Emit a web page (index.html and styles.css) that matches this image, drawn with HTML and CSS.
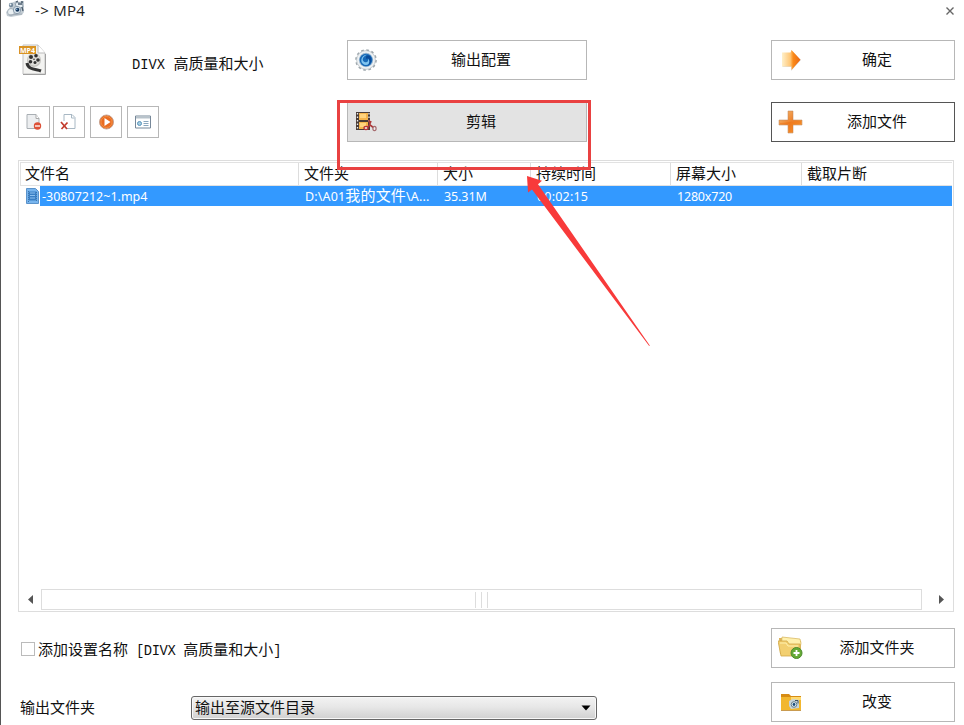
FILE: index.html
```html
<!DOCTYPE html>
<html lang="zh-CN">
<head>
<meta charset="utf-8">
<title>MP4</title>
<link rel="stylesheet" href="styles.css">
</head>
<body>
<div class="window">
  <header class="titlebar">
    <svg class="app-icon" width="20" height="18" viewBox="0 0 20 18">
      <path d="M5 3l5-2 3 1 5-1v11l-2 3-11 2-4-1-1-4 3-3z" fill="#c4cdd4"/>
      <path d="M9 3l7-1 1 5-6 2z" fill="#e6edf2" stroke="#8595a3" stroke-width=".8"/>
      <path d="M10 2l2-1M15 2l2 0M12 4h4M16 7l1 4" stroke="#4a5b6c" stroke-width="1.3"/>
      <circle cx="5" cy="5" r="2.2" fill="#72879a"/><circle cx="4.5" cy="4.5" r=".9" fill="#edf4f7"/>
      <circle cx="5" cy="12" r="3.5" fill="#e9eff2" stroke="#a5b0ba"/>
      <circle cx="11" cy="10" r="3.7" fill="#dce6ee" stroke="#8b9cab"/>
      <circle cx="11.4" cy="9.8" r="2" fill="#16385c"/><circle cx="10.8" cy="9.2" r=".7" fill="#a5ceed"/>
      <path d="M3 15l13-1" stroke="#a0abb5"/>
    </svg>
    <span class="title">-&gt; MP4</span>
    <svg class="close" width="10" height="10" viewBox="0 0 10 10"><path d="M1.500 1.500l7 7M8.500 1.500l-7 7" stroke="#666" stroke-width="1.400"/></svg>
  </header>

  <section class="controls">
    <div class="profile">
      <svg width="29" height="34" viewBox="0 0 29 34">
        <path d="M4 2h15l7 8v21H4z" fill="#f3f3f1" stroke="#c3c3c3"/>
        <path d="M4 31.500h22.500V11" fill="none" stroke="#a0a0a0"/>
        <path d="M19 2v8h7" fill="#fff" stroke="#bbb"/>
        <circle cx="15" cy="17" r="7" fill="#c4c3bf"/><circle cx="15" cy="16.500" r="6" fill="#deddd9"/>
        <g fill="#303030"><circle cx="12" cy="14" r="2"/><circle cx="17" cy="12.700" r="1.800"/><circle cx="19" cy="17" r="1.800"/><circle cx="11.500" cy="18.700" r="1.800"/><circle cx="16" cy="19.500" r="1.500"/><circle cx="15" cy="16.300" r=".8"/></g>
        <path d="M8 20c1 7 9 6 14 8" fill="none" stroke="#333" stroke-width="3"/>
        <path d="M0 3h17v8H0z" fill="#d99323"/>
        <text x="1" y="9.800" class="badge-text" textLength="15">MP4</text>
      </svg>
      <span class="profile-name"><span class="mono">DIVX </span>高质量和大小</span>
    </div>
    <button class="btn config">
      <svg width="24" height="24" viewBox="0 0 24 24">
        <circle cx="12" cy="12" r="10" fill="#e5eaee" stroke="#9da6ac" stroke-width="1.600" stroke-dasharray="2.620 2.620"/>
        <circle cx="12" cy="12" r="9.300" fill="#eff2f4" stroke="#b2babf" stroke-width=".6"/><circle cx="12" cy="12" r="7.200" fill="#9db9d2"/>
        <circle cx="12" cy="12" r="6.300" fill="#1769b7"/>
        <path d="M14 6.500c-5 1-7 6-3.500 7.500 3 1 4-1 3.500-3 3 2 2 6-2 6-5 0-7-7-1-10z" fill="#7fc4f0"/>
        <path d="M12 9c1-2 4-2 5 1 1 4-1 6-3 7 2-3 2-5 0-7-1 2-2 1-2-1z" fill="#0b4a98"/>
      </svg><span>输出配置</span>
    </button>
    <button class="btn ok">
      <svg width="24" height="24" viewBox="0 0 24 24">
        <defs><linearGradient id="arrow-fill"><stop stop-color="#fff0ca"/><stop offset=".45" stop-color="#ffc675"/><stop offset=".6" stop-color="#fb8b19"/><stop offset="1" stop-color="#e96512"/></linearGradient></defs>
        <path d="M4.500 5h8.500V2l10 10-10 11v-4H4.500z" fill="#aaa" opacity=".4"/><path d="M4 4.500h8.500l1-2.500 9 9.800-9 10.200v-3.500H4z" fill="url(#arrow-fill)"/>
      </svg><span>确定</span>
    </button>
    <div class="tools">
      <button class="tool"><svg width="18" height="18" viewBox="0 0 18 18"><path d="M2 1.500h9l3 4v10H2z" fill="#eceef0" stroke="#a9afb4"/><path d="M11 1.500v4h3" fill="#fff" stroke="#aaa"/><circle cx="12.500" cy="13" r="3.700" fill="#dd5137"/><path d="M10 13h5" stroke="#fff" stroke-width="1.300"/></svg></button>
      <button class="tool second"><svg width="18" height="18" viewBox="0 0 18 18"><path d="M4 8V1.500h8l3 3v11H7" fill="#fff" stroke="#a8b8c4"/><path d="M11.500 1.500v3.500h3" fill="none" stroke="#a8b8c4"/><path d="M1 9l6 7M7.500 9.500L1.500 16" stroke="#c23b2c" stroke-width="1.700"/></svg></button>
      <button class="tool"><svg width="18" height="18" viewBox="0 0 18 18"><circle cx="9.500" cy="9" r="7" fill="#e96b22" stroke="#c7a28f"/><circle cx="9.500" cy="9" r="5.500" fill="none" stroke="#f69b4c" stroke-width=".7"/><path d="M7.500 5l6 4-6 4z" fill="#fff"/></svg></button>
      <button class="tool"><svg width="18" height="18" viewBox="0 0 18 18"><path d="M1.500 3h15v12h-15z" fill="#fff" stroke="#789"/><path d="M2 3.500h14v2H2z" fill="#b8c3cb"/><path d="M9.500 8.500h5M9.500 10.500h5M9.500 12.500h5" stroke="#8ba7bd"/><circle cx="5.500" cy="10.500" r="2" fill="#a5cce0" stroke="#5794bb"/></svg></button>
    </div>
    <button class="btn clip">
      <svg width="24" height="24" viewBox="0 0 24 24">
        <path d="M2 2h14v18H2z" fill="#493b35"/><path d="M5 3h9v7H5zM5 12h9v7H5z" fill="#f5b44b"/><path d="M6 4h6v4H6zM6 13h6v4H6z" fill="#ffd37d"/>
        <path d="M3.500 3v17M15 3v9" stroke="#eee" stroke-width="1.300" stroke-dasharray="1.500 2"/>
        <path d="M15 10l1 5 4 3M17 11l-2 5-3 2" fill="none" stroke="#ad3738" stroke-width="1.600"/><ellipse cx="12" cy="18" rx="2" ry="1.600" fill="#eadbd5" stroke="#b93338" stroke-width="1.300"/><ellipse cx="20.500" cy="18.500" rx="1.600" ry="2.200" fill="#eee" stroke="#a66b6e" stroke-width="1.200"/>
      </svg><span>剪辑</span>
    </button>
    <button class="btn add">
      <svg width="26" height="26" viewBox="0 0 26 26">
        <defs><linearGradient id="plus-fill" x2="1" y2="1"><stop stop-color="#f6c27c"/><stop offset=".5" stop-color="#ee812b"/><stop offset="1" stop-color="#ffb34d"/></linearGradient></defs>
        <path d="M10 2h5v9h9v5h-9v8h-5v-8H1v-5h9z" fill="url(#plus-fill)" stroke="#bd865b" stroke-opacity=".65" stroke-width=".8"/><path d="M2 14c7 0 12-2 21-2v3h-8v8h-4v-8H2z" fill="#ef6f0b" opacity=".45"/>
      </svg><span>添加文件</span>
    </button>
  </section>

  <section class="list">
    <div class="row head"><span>文件名</span><span>文件夹</span><span>大小</span><span>持续时间</span><span>屏幕大小</span><span>截取片断</span></div>
    <div class="row selected">
      <span class="file"><svg width="13" height="16" viewBox="0 0 13 16"><path d="M.5.5h9l3 3v12H.5z" fill="#78b5ee" stroke="#5b93cb"/><path d="M2.500 3.500h8v9h-8z" fill="#397fc5"/><path d="M4 5h5M4 7.500h5M4 10h5" stroke="#8dc1ef"/><path d="M2.500 3v11M10.500 4v10" stroke="#3e75ab" stroke-dasharray="1 1"/></svg><b class="file-name">-30807212~1.mp4</b></span>
      <span class="path">D:\A01<i>我的文件</i>\A...</span><span>35.31M</span><span class="time">00:02:15</span><span class="size">1280x720</span><span></span>
    </div>
    <div class="rows"></div>
    <div class="scroll">
      <svg width="22" height="21" viewBox="0 0 22 21"><path d="M14 6v9l-5-4.500z" fill="#555"/></svg>
      <div class="thumb"><i></i><i></i><i></i></div>
      <svg width="31" height="21" viewBox="0 0 31 21"><path d="M17 6v9l5-4.500z" fill="#555"/></svg>
    </div>
  </section>

  <footer class="footer">
    <label class="check"><span class="box"></span><span>添加设置名称<span class="mono tight"> [DIVX </span>高质量和大小<span class="mono tight">]</span></span></label>
    <button class="btn folder">
      <svg width="26" height="26" viewBox="0 0 26 26"><path d="M1 3h9l2 3h11v13H2z" fill="#dbb158"/><path d="M4 2l18 2 1 4-2 11H3z" fill="#fff1ae" stroke="#d5b257" stroke-width=".7"/><path d="M0 6h9l2 3h11l-1 12H3z" fill="#f2cf70" stroke="#d2a747" stroke-width=".8"/><path d="M2 8h6l2 3h10" fill="none" stroke="#fff1af"/><circle cx="18.500" cy="18" r="5.500" fill="#65aa35" stroke="#4d8c2d"/><path d="M18.500 15v6M15.500 18h6" stroke="#fff" stroke-width="1.800"/></svg><span>添加文件夹</span>
    </button>
    <div class="output"><span>输出文件夹</span><div class="select"><span>输出至源文件目录</span><svg width="10" height="6" viewBox="0 0 10 6"><path d="M.5.5h9L5 5.500z" fill="#000"/></svg></div></div>
    <button class="btn change">
      <svg width="26" height="26" viewBox="0 0 26 26"><path d="M3 5h8l2 2h10v14H3z" fill="#d78c14"/><path d="M3 8h20v13H3z" fill="#f2b72f"/><path d="M13 8h10v3H13z" fill="#ffda70"/><path d="M11 12l4-2 6 1v8l-8 1-2-3z" fill="#c7d4db"/><circle cx="16" cy="15.500" r="2.800" fill="#e7f2f9" stroke="#667e8b"/><circle cx="16" cy="15.500" r="1.400" fill="#184a79"/><path d="M17 11.500h3v3" fill="none" stroke="#3d5262"/><path d="M3 21.500h20" stroke="#c99b50"/></svg><span>改变</span>
    </button>
  </footer>

  <svg class="annotation" width="330" height="260" viewBox="0 0 330 260">
    <path d="M8.500 6.500h251v67H8.500z" fill="none" stroke="#e94141" stroke-width="3"/>
    <path d="M197 81l15 4.700-4 3.500 111.800 161.300-.6.500L202 94.500l-4 3z" fill="#f83a3a"/>
  </svg>
</div>
</body>
</html>
```
FILE: styles.css
```css
* { box-sizing: border-box; }
body { margin: 0; background: #fff; color: #111; font: 15px/20px "Noto Sans CJK SC", sans-serif; overflow: hidden; }
button { font: inherit; color: inherit; background: #fff; padding: 0; margin: 0; border-radius: 0; }
svg { display: block; flex: none; }
i, b { font-style: normal; font-weight: inherit; }
.window { position: relative; width: 964px; height: 725px; border-left: 1px solid #555; display: flex; flex-direction: column; overflow: hidden; }
.titlebar { height: 40px; display: flex; align-items: flex-start; padding: 0 9px 0 5px; }
.app-icon { margin-top: 0; }
.title { font: 15px/20px "Open Sans", sans-serif; margin-left: 9px; flex: 1; letter-spacing: .3px; color: #222; }
.close { margin-top: 6px; }
.controls { display: grid; grid-template-columns: 329px 240px 184px; grid-template-rows: 40px 40px; justify-content: start; row-gap: 22px; padding-left: 17px; height: 120px; }
.btn { display: grid; grid-template-columns: 26px 1fr; align-items: center; border: 1px solid #b7b7b7; height: 40px; padding: 0 6px; text-align: center; }
.btn > span { margin: -2px 0 0 2px; }
.ok, .add { margin-left: 184px; width: 184px; }
.clip { background: #e3e3e3; }
.add { border-color: #555; }
.profile { display: flex; align-items: flex-start; padding: 3px 0 0 1px; }
.profile-name { margin: 10px 0 0 84px; }
.badge-text { font: 700 7px "Open Sans", sans-serif; fill: #fff; }
.mono { font: 13.800px "Liberation Mono", monospace; white-space: pre; }
.tight { letter-spacing: -.4px; }
.tools { display: flex; gap: 5px; padding-top: 4px; }
.tool { width: 32px; height: 32px; border: 1px solid #b7b7b7; display: grid; place-items: center; }
.tool.second { margin-left: -2px; }
.list { width: 936px; height: 452px; margin-left: 17px; border: 1px solid #ddd; padding: 1px 1px 0; display: flex; flex-direction: column; }
.row { display: grid; grid-template-columns: 279px 139px 93px 140px 131px 1fr; flex: none; }
.head { height: 24px; line-height: 20px; border: 1px solid #e2e2e2; border-right: 0; grid-template-columns: 278px 139px 93px 140px 131px 1fr; }
.head span { padding-left: 5px; border-right: 1px solid #ddd; }
.head span:first-child { padding-left: 4px; }
.head span:last-child { border-right: 0; }
.selected { height: 20px; background: linear-gradient(90deg, #fff 20px, #3399ff 20px); color: #fff; font: 12.500px/21px "Noto Sans", "Noto Sans CJK SC", sans-serif; }
.selected > span { padding-left: 6px; height: 20px; white-space: nowrap; letter-spacing: -.1px; }
.selected i { font-size: 15px; line-height: 18px; }
.selected .path { letter-spacing: .15px; line-height: 19px; }
.selected .time { letter-spacing: .2px; }
.selected .size { letter-spacing: -.2px; }
.selected .file { display: flex; align-items: center; gap: 3px; letter-spacing: 0; }
.rows { flex: 1; }
.scroll { height: 22px; display: flex; align-items: flex-start; margin: 0 -1px; }
.thumb { flex: 1; height: 21px; border: 1px solid #ddd; display: flex; justify-content: center; align-items: center; gap: 5px; }
.thumb i { width: 1px; height: 16px; background: #ddd; }
.footer { display: grid; grid-template-columns: 753px 184px; grid-template-rows: 40px 40px; row-gap: 14px; padding: 16px 0 0 17px; }
.check { display: flex; align-items: center; padding: 2px 0 0 3px; gap: 3px; }
.box { width: 14px; height: 14px; border: 1px solid #bbb; }
.output { display: flex; align-items: center; padding: 11px 0 0 2px; }
.output > span { width: 171px; margin-top: -2px; }
.select { width: 406px; height: 24px; border: 1px solid #666; border-radius: 3px; display: flex; align-items: center; justify-content: space-between; padding: 0 5px 0 3px; background: linear-gradient(#f3f3f3, #e7e7e7 45%, #d0d0d0); box-shadow: inset 0 0 0 1px #f8f8f8; }
.select span { margin-top: -2px; }
.annotation { position: absolute; left: 329px; top: 95px; pointer-events: none; }
```
